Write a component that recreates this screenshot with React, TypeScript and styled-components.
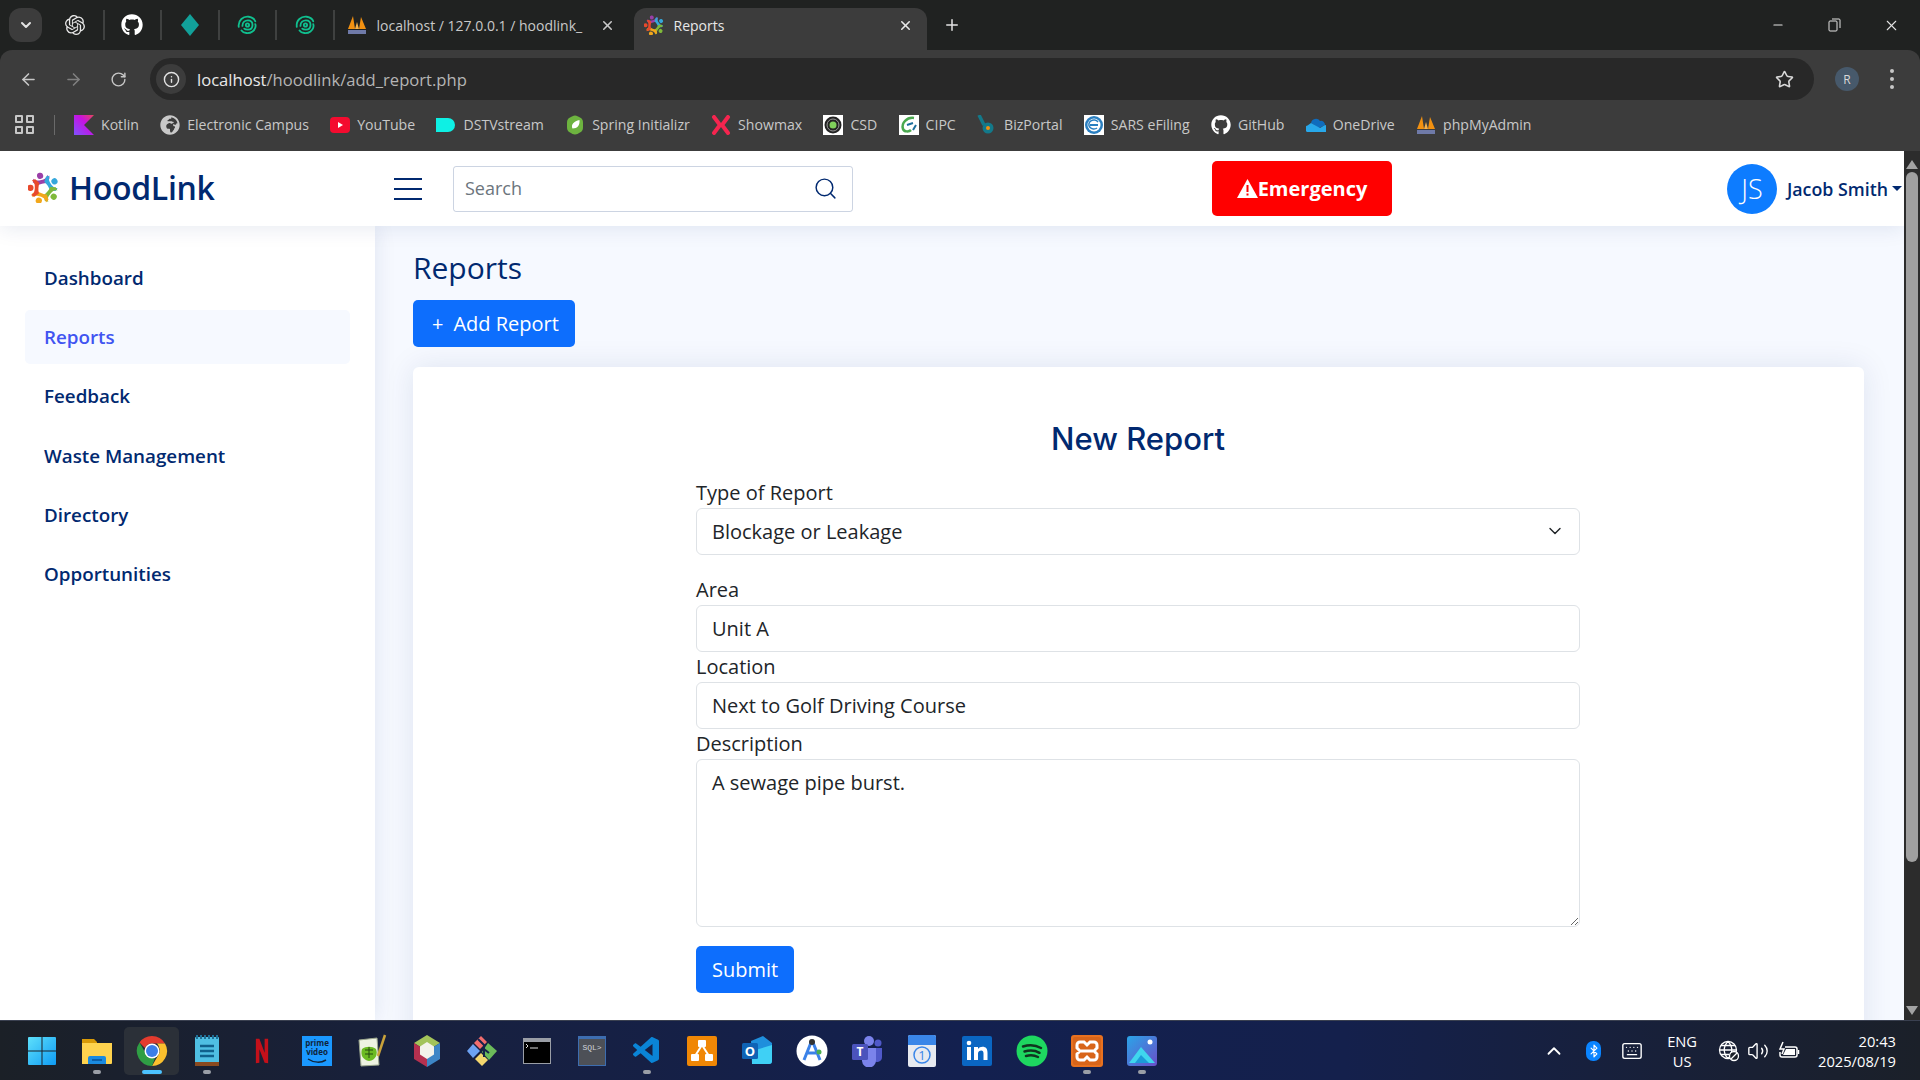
import React from "react";
import styled, { createGlobalStyle } from "styled-components";
import { FaGithub, FaGlobeAfrica } from "react-icons/fa";
import { SiOpenai } from "react-icons/si";
import { VscVscode } from "react-icons/vsc";
import {
  ArrowLeft,
  ArrowRight,
  RotateCw,
  Info,
  Star,
  ChevronDown,
  ChevronUp,
  X,
  Plus,
  Minus,
  Search,
  Bluetooth,
  Keyboard,
  Volume2,
} from "lucide-react";

const GlobalStyle = createGlobalStyle`
  * { box-sizing: border-box; }
  html, body { margin: 0; padding: 0; height: 100%; overflow: hidden; }
  body { font-family: "Open Sans", "Noto Sans", sans-serif; background: #202221; }
`;

const Frame = styled.div`
  width: 1920px;
  height: 1080px;
  display: flex;
  flex-direction: column;
  overflow: hidden;
`;

/* ---------- browser chrome ---------- */

const TabStrip = styled.div`
  height: 50px;
  flex: none;
  background: #202221;
  display: flex;
  align-items: center;
  padding-left: 9px;
  color: #e3e3e3;
`;

const TabSearch = styled.div`
  width: 33px;
  height: 34px;
  border-radius: 12px;
  background: #3c3c3c;
  display: flex;
  align-items: center;
  justify-content: center;
  margin-right: 5px;
`;

const PinnedTab = styled.div`
  width: 57.5px;
  height: 30px;
  display: flex;
  align-items: center;
  justify-content: center;
  border-right: 2px solid #3f4140;
  flex: none;
`;

const Tab = styled.div<{ $active?: boolean }>`
  width: ${(p) => (p.$active ? 293 : 299)}px;
  height: 42px;
  margin-top: 8px;
  padding: 0 ${(p) => (p.$active ? "14px" : "18.5px")} 8px ${(p) => (p.$active ? 10 : 12)}px;
  display: flex;
  align-items: center;
  gap: 10px;
  flex: none;
  border-radius: 12px 12px 0 0;
  background: ${(p) => (p.$active ? "#3c3c3c" : "transparent")};
  color: ${(p) => (p.$active ? "#e8e8e8" : "#c9c9c9")};
  font-size: 14px;
`;

const TabTitle = styled.span`
  flex: 1;
  white-space: nowrap;
  overflow: hidden;
`;

const NewTab = styled.div`
  width: 50px;
  display: flex;
  justify-content: center;
`;

const WindowControls = styled.div`
  margin-left: auto;
  display: flex;
  align-items: center;
`;

const WindowButton = styled.div`
  width: 57px;
  height: 50px;
  display: flex;
  align-items: center;
  justify-content: center;
`;

const Toolbar = styled.div`
  height: 51px;
  flex: none;
  background: #3c3c3c;
  border-radius: 12px 12px 0 0;
  display: flex;
  align-items: center;
  padding: 7px 0 0 6px;
  color: #c7c7c7;
`;

const NavButton = styled.div<{ $dim?: boolean }>`
  width: 45px;
  display: flex;
  justify-content: center;
  color: ${(p) => (p.$dim ? "#808080" : "#c7c7c7")};
`;

const AddressBar = styled.div`
  margin-left: 9px;
  width: 1664px;
  height: 42px;
  border-radius: 21px;
  background: #282828;
  display: flex;
  align-items: center;
  padding: 0 20px 0 6px;
  font-size: 16.6px;
  color: #e8e8e8;
`;

const InfoChip = styled.div`
  width: 30px;
  height: 30px;
  border-radius: 50%;
  background: #3c3c3c;
  display: flex;
  align-items: center;
  justify-content: center;
  margin-right: 11px;
`;

const UrlDim = styled.span`
  color: #b5b5b5;
`;

const StarSlot = styled.div`
  margin-left: auto;
  display: flex;
`;

const ProfileBubble = styled.div`
  width: 24px;
  height: 24px;
  border-radius: 50%;
  background: #47596b;
  color: #d8d8d8;
  font-size: 12px;
  display: flex;
  align-items: center;
  justify-content: center;
  margin-left: 21px;
`;

const Kebab = styled.div`
  margin-left: 31px;
  display: flex;
  flex-direction: column;
  gap: 4px;
  > i {
    width: 4px;
    height: 4px;
    border-radius: 50%;
    background: #c7c7c7;
  }
`;

const BookmarkBar = styled.div`
  height: 50px;
  flex: none;
  background: #3c3c3c;
  display: flex;
  align-items: center;
  padding: 0 0 3px 15px;
  font-size: 14.1px;
  color: #c8c8c8;
`;

const AppsGrid = styled.div`
  width: 19px;
  height: 19px;
  display: grid;
  grid-template-columns: 1fr 1fr;
  gap: 3px;
  > i {
    border: 2px solid #c7c7c7;
    border-radius: 1px;
  }
`;

const BarDivider = styled.div`
  width: 1px;
  height: 20px;
  background: #6a6a6a;
  margin: 0 19px 0 20px;
`;

const Bookmark = styled.div`
  display: flex;
  align-items: center;
  gap: 7px;
  margin-right: 21.3px;
  white-space: nowrap;
  > svg {
    flex: none;
  }
`;

/* ---------- page ---------- */

const Viewport = styled.div`
  flex: 1;
  min-height: 0;
  display: flex;
  background: #f6f9ff;
`;

const Page = styled.div`
  flex: 1;
  min-width: 0;
  display: flex;
  flex-direction: column;
  overflow: hidden;
`;

const Header = styled.header`
  height: 75px;
  flex: none;
  background: #fff;
  display: flex;
  align-items: center;
  position: relative;
  z-index: 2;
  box-shadow: 0 2px 20px rgba(1, 41, 112, 0.1);
`;

const Logo = styled.div`
  width: 394px;
  padding: 0 0 2px 28px;
  display: flex;
  align-items: center;
  gap: 10px;
  font-size: 32px;
  font-weight: 600;
  color: #012970;
  letter-spacing: -0.3px;
`;

const Hamburger = styled.div`
  width: 28px;
  height: 22px;
  display: flex;
  flex-direction: column;
  justify-content: space-between;
  margin-right: 31px;
  > i {
    height: 2px;
    background: #012970;
  }
`;

const SearchBox = styled.div`
  width: 400px;
  height: 46px;
  border: 1px solid rgba(1, 41, 112, 0.2);
  border-radius: 3px;
  display: flex;
  align-items: center;
  padding: 0 14px 1px 9px;
  color: #012970;
  margin-right: 359px;
`;

const SearchField = styled.input`
  flex: 1;
  min-width: 0;
  border: 0;
  outline: 0;
  font: 18px "Open Sans", sans-serif;
  color: #012970;
  &::placeholder {
    color: #6c757d;
  }
`;

const EmergencyButton = styled.button`
  width: 180px;
  height: 55px;
  border: 0;
  border-radius: 5px;
  background: #ff0000;
  color: #fff;
  font: 700 20px "Open Sans", sans-serif;
  display: flex;
  align-items: center;
  justify-content: center;
`;

const Profile = styled.div`
  margin-left: auto;
  display: flex;
  align-items: center;
  color: #012970;
  font-size: 17.8px;
  font-weight: 600;
  padding-right: 2px;
`;

const Avatar = styled.div`
  width: 50px;
  height: 50px;
  border-radius: 50%;
  background: #0d7cff;
  color: #fff;
  font-size: 27px;
  font-weight: 300;
  display: flex;
  align-items: center;
  justify-content: center;
  margin-right: 10px;
`;

const Caret = styled.i`
  width: 0;
  height: 0;
  margin-left: 4px;
  border: 5px solid transparent;
  border-top-color: #012970;
  border-bottom: 0;
`;

const Body = styled.div`
  flex: 1;
  min-height: 0;
  display: flex;
`;

const Sidebar = styled.aside`
  width: 375px;
  flex: none;
  background: #fff;
  padding: 25px 25px;
  box-shadow: 0 0 20px rgba(1, 41, 112, 0.1);
  display: flex;
  flex-direction: column;
  gap: 5px;
`;

const NavItem = styled.a<{ $active?: boolean }>`
  height: 54.2px;
  display: flex;
  align-items: center;
  padding-left: 19px;
  border-radius: 5px;
  font-size: 18.8px;
  font-weight: 600;
  color: ${(p) => (p.$active ? "#4154f1" : "#012970")};
  background: ${(p) => (p.$active ? "#f6f9ff" : "transparent")};
`;

const Main = styled.main`
  flex: 1;
  min-width: 0;
  padding: 19px 40px 0 38px;
`;

const PageTitle = styled.h1`
  margin: 0 0 9px;
  font-size: 30px;
  line-height: 46px;
  font-weight: 500;
  color: #012970;
`;

const PrimaryButton = styled.button`
  height: 47px;
  padding: 0 16px;
  border: 0;
  border-radius: 5px;
  background: #0d6efd;
  color: #fff;
  font: 20px "Open Sans", sans-serif;
  display: inline-flex;
  align-items: center;
`;

const AddButton = styled(PrimaryButton)`
  padding: 0 16px 0 19px;
  gap: 10px;
`;

const Card = styled.section`
  margin-top: 20px;
  height: 800px;
  background: #fff;
  border-radius: 6px;
  box-shadow: 0 0 30px rgba(1, 41, 112, 0.1);
  padding: 50px 284px 0 283px;
`;

const CardTitle = styled.h2`
  margin: 0 0 16.5px;
  text-align: center;
  font: 500 31px/44px Inter, "Open Sans", sans-serif;
  color: #012970;
`;

const Label = styled.label`
  display: block;
  height: 30px;
  font-size: 20px;
  line-height: 30px;
  color: #212529;
`;

const fieldCss = `
  display: block;
  width: 100%;
  border: 1px solid #dee2e6;
  border-radius: 6px;
  background: #fff;
  padding: 0 15px;
  font: 20px "Open Sans", sans-serif;
  color: #212529;
  outline: 0;
`;

const Field = styled.input`
  ${fieldCss}
  height: 47px;
`;

const SelectWrap = styled.div`
  position: relative;
  margin-bottom: 20px;
  color: #212529;
  > svg {
    position: absolute;
    right: 15px;
    top: 13px;
    pointer-events: none;
  }
`;

const SelectField = styled.select`
  ${fieldCss}
  height: 47px;
  appearance: none;
`;

const TextBlock = styled.textarea`
  ${fieldCss}
  height: 168px;
  padding-top: 8px;
  line-height: 30px;
  resize: vertical;
  margin-bottom: 19px;
`;

/* ---------- scrollbar ---------- */

const Scrollbar = styled.div`
  width: 16px;
  flex: none;
  background: #2c2c2c;
  display: flex;
  flex-direction: column;
  align-items: center;
  justify-content: space-between;
  padding: 9px 0 5px;
`;

const ScrollArrow = styled.i<{ $down?: boolean }>`
  width: 0;
  height: 0;
  border-left: 6px solid transparent;
  border-right: 6px solid transparent;
  ${(p) => (p.$down ? "border-top: 9px solid #a3a3a3;" : "border-bottom: 9px solid #a3a3a3;")}
`;

const ScrollThumb = styled.i`
  width: 12px;
  height: 690px;
  border-radius: 6px;
  background: #a0a0a0;
  margin: 3px 0 auto;
`;

/* ---------- taskbar ---------- */

const Taskbar = styled.footer`
  height: 60px;
  flex: none;
  display: flex;
  align-items: center;
  padding-left: 14px;
  color: #fff;
  background: linear-gradient(90deg, #1b2027 0%, #172040 25%, #13204f 50%, #14204c 70%, #1b2029 100%);
  border-top: 1px solid #3a4050;
`;

const TaskSlot = styled.div<{ $active?: boolean }>`
  width: 55px;
  height: 48px;
  flex: none;
  position: relative;
  display: flex;
  align-items: center;
  justify-content: center;
  border-radius: 5px;
  ${(p) => p.$active && "background: #2b3038;"}
`;

const RunDot = styled.i<{ $active?: boolean }>`
  position: absolute;
  left: 50%;
  bottom: 1px;
  transform: translateX(-50%);
  width: ${(p) => (p.$active ? 20 : 8)}px;
  height: 4px;
  border-radius: 2px;
  background: ${(p) => (p.$active ? "#4cc2ff" : "#9a9ea6")};
`;

const Tray = styled.div`
  margin-left: auto;
  display: flex;
  align-items: center;
  padding-right: 24px;
  font-size: 14.7px;
`;

const TrayIcon = styled.div<{ $gap?: number }>`
  display: flex;
  margin-right: ${(p) => p.$gap ?? 12}px;
`;

const BluetoothBadge = styled.div`
  width: 15px;
  height: 20px;
  border-radius: 7px;
  background: #0a84ff;
  display: flex;
  align-items: center;
  justify-content: center;
  margin-right: 20px;
`;

const Lang = styled.div`
  text-align: center;
  line-height: 20px;
  margin: 0 21px 0 0;
`;

const Clock = styled.div`
  text-align: right;
  line-height: 20px;
  margin-left: 11px;
`;

/* ---------- drawn icons ---------- */

type IconProps = { s?: number };

const Swirl = ({ s = 22 }: IconProps) => (
  <svg width={s} height={s} viewBox="0 0 24 24" fill="none" stroke="#10c08f" strokeWidth="2" strokeLinecap="round">
    <path d="M3 14C2 7 8 2 14 3c3 .5 6 2 7 5" />
    <path d="M6 18c2 3 8 4 12 1 3-2 4-6 3-8" />
    <path d="M7 13c0-4 3-6 6-6 3 0 5 2 5 5 0 3-2 5-5 5-1 0-3 0-4-1" />
    <circle cx="12.500" cy="12" r="1.800" />
  </svg>
);

const Diamond = () => (
  <svg width="22" height="24" viewBox="0 0 22 24">
    <path d="M11 1l9 11-9 11L2 12z" fill="#12a19a" />
  </svg>
);

const Pma = ({ s = 20 }: IconProps) => (
  <svg width={s} height={s} viewBox="0 0 20 20">
    <path d="M1 14L6 1l2 13z" fill="#f29111" />
    <path d="M8 14l2-7 2 7z" fill="#f6b24a" />
    <path d="M12 14l2-12 5 12z" fill="#f29111" />
    <rect x="1" y="15" width="18" height="4" fill="#6f7aa8" />
  </svg>
);

const personAngles = [
  { a: -15, c: "#9b3fa8" },
  { a: 57, c: "#35a8dc" },
  { a: 129, c: "#7fb93a" },
  { a: 201, c: "#f2a71b" },
  { a: 273, c: "#e8492c" },
];

const HoodMark = ({ s = 20 }: IconProps) => (
  <svg width={s} height={s} viewBox="0 0 32 32" fill="none">
    {personAngles.map((p) => (
      <g key={p.c} transform={`rotate(${p.a} 16 17)`}>
        <circle cx="16" cy="3.500" r="3.200" fill={p.c} />
        <path d="M8.500 4.500c1.500 2.500 3 3.500 7.500 3.500s6-1 7.500-3.500L25 8l-3.500 4.500c-3.500-1-7.500-1-11 0L7 8z" fill={p.c} />
      </g>
    ))}
  </svg>
);

const WhiteFavicon = ({ children }: { children: React.ReactNode }) => (
  <svg width="20" height="20" viewBox="0 0 20 20">
    <rect width="20" height="20" fill="#fff" />
    {children}
  </svg>
);

const KotlinIcon = () => (
  <svg width="20" height="20" viewBox="0 0 20 20">
    <defs>
      <linearGradient id="kt" x1="0" y1="1" x2="1" y2="0">
        <stop offset="0" stopColor="#7f52ff" />
        <stop offset="0.6" stopColor="#c711e1" />
        <stop offset="1" stopColor="#e44857" />
      </linearGradient>
    </defs>
    <path d="M0 0h20L10 10l10 10H0z" fill="url(#kt)" />
  </svg>
);

const YoutubeIcon = () => (
  <svg width="20" height="20" viewBox="0 0 20 20">
    <rect y="2" width="20" height="16" rx="4" fill="#f40b2f" />
    <path d="M8 7l5 3-5 3z" fill="#fff" />
  </svg>
);

const DstvIcon = () => (
  <svg width="20" height="20" viewBox="0 0 20 20">
    <path d="M0 3h12a7 7 0 010 14H0z" fill="#0ef0e4" />
  </svg>
);

const SpringIcon = () => (
  <svg width="20" height="20" viewBox="0 0 20 20">
    <path d="M10 .5c2 0 3 1 5 2s3 2.500 3 5v5c0 2.500-1 4-3 5s-3 2-5 2-3-1-5-2-3-2.500-3-5v-5c0-2.500 1-4 3-5s3-2 5-2z" fill="#6db33f" />
    <path d="M14.500 5c.5 5-2 8.500-7 8.500C5.500 10 9 6 14.500 5z" fill="#fff" />
  </svg>
);

const ShowmaxIcon = () => (
  <svg width="20" height="20" viewBox="0 0 20 20" fill="none" stroke="#f5254f" strokeWidth="4" strokeLinecap="round">
    <path d="M3 2l6 8-6 8M17 2l-6 8 6 8" />
  </svg>
);

const CsdIcon = () => (
  <WhiteFavicon>
    <circle cx="10" cy="10" r="8.500" fill="#222" />
    <circle cx="10" cy="10" r="6" fill="none" stroke="#999" />
    <circle cx="10" cy="10" r="3.500" fill="#7fd05a" />
  </WhiteFavicon>
);

const CipcIcon = () => (
  <WhiteFavicon>
    <path d="M15 3C8 2 2 8 4 14c1 3 6 3 8 1" fill="none" stroke="#4aa84f" strokeWidth="2.500" />
    <path d="M8 10l6-2M14 15l3-5" stroke="#1d6f9c" strokeWidth="2" />
  </WhiteFavicon>
);

const BizIcon = () => (
  <svg width="20" height="20" viewBox="0 0 20 20">
    <path d="M2 0l5 10" stroke="#13798a" strokeWidth="3.500" />
    <circle cx="11" cy="13" r="5.500" fill="#13798a" />
    <circle cx="11" cy="13" r="2" fill="#f29111" />
  </svg>
);

const SarsIcon = () => (
  <WhiteFavicon>
    <circle cx="10" cy="10" r="9" fill="#2a7fc0" />
    <circle cx="10" cy="10" r="6.500" fill="#fff" />
    <path d="M6 10h8" stroke="#2a7fc0" strokeWidth="2" />
    <path d="M14 7a5 4.500 0 10-1 6" fill="none" stroke="#2a7fc0" strokeWidth="1.500" />
  </WhiteFavicon>
);

const OneDriveIcon = () => (
  <svg width="20" height="20" viewBox="0 0 20 20">
    <path d="M5 8a5 5 0 019-2 4 4 0 015 4l-6 3z" fill="#0f6cbd" />
    <path d="M1 17a3.500 3.500 0 01.5-6.500L5 8l9 5 5-3a3.500 3.500 0 01-1 7z" fill="#28a8ea" />
  </svg>
);

const WindowsLogo = () => (
  <svg width="30" height="30" viewBox="0 0 30 30">
    <defs>
      <linearGradient id="win" x1="0" y1="0" x2="1" y2="1">
        <stop offset="0" stopColor="#5ee0fb" />
        <stop offset="1" stopColor="#0f9bf3" />
      </linearGradient>
    </defs>
    <path d="M1 2a1 1 0 011-1h12.500v13.500H1zM15.500 1H28a1 1 0 011 1v12.500H15.500zM1 15.500h13.500V29H2a1 1 0 01-1-1zM15.500 15.500H29V28a1 1 0 01-1 1H15.500z" fill="url(#win)" />
  </svg>
);

const ExplorerIcon = () => (
  <svg width="32" height="32" viewBox="0 0 32 32">
    <path d="M1 4h12l3 3v8H1z" fill="#d99a07" />
    <path d="M1 8h30v20a1 1 0 01-1 1H1z" fill="#ffd34e" />
    <path d="M9 21h14a2 2 0 012 2v6H7v-6a2 2 0 012-2z" fill="#1b8be0" />
    <rect x="11" y="24" width="10" height="2" fill="#0d5fa8" />
  </svg>
);

const ChromeIcon = () => (
  <svg width="32" height="32" viewBox="0 0 32 32">
    <path d="M16 1a15 15 0 0113 7.500H16a7.500 7.500 0 00-7 4.500L3.500 7.500A15 15 0 0116 1z" fill="#e33b2e" />
    <path d="M29 8.500A15 15 0 0116 31l6.500-11.300A7.500 7.500 0 0023 12.500 7 7 0 0021 8.500z" fill="#fbc02d" />
    <path d="M16 31A15 15 0 013.500 7.500L10 19a7.500 7.500 0 009 4z" fill="#2f9e44" />
    <circle cx="16" cy="16" r="7.500" fill="#fff" />
    <circle cx="16" cy="16" r="6" fill="#3b7de8" />
  </svg>
);

const NotepadIcon = () => (
  <svg width="24" height="32" viewBox="0 0 24 32">
    <rect y="2" width="24" height="27" rx="1" fill="#4fbfe3" />
    <rect y="27" width="24" height="4" fill="#8a4a20" />
    <path d="M2 0v4M6 0v4M10 0v4M14 0v4M18 0v4M22 0v4" stroke="#1f6f96" strokeWidth="2" />
    <path d="M5 11h14M5 16h14M5 21h14" stroke="#11618c" strokeWidth="2.500" />
  </svg>
);

const NetflixIcon = () => (
  <svg width="14" height="30" viewBox="0 0 16 30">
    <path d="M1 1h4l6 16V1h4v28l-4-.5L5 13v15.500L1 29z" fill="#c4101a" />
  </svg>
);

const PrimeIcon = () => (
  <svg width="30" height="30" viewBox="0 0 30 30">
    <rect width="30" height="30" fill="#1a98ff" />
    <text x="15" y="10" textAnchor="middle" fontFamily="Open Sans" fontWeight="700" fontSize="8" fill="#10243a">prime</text>
    <text x="15" y="19" textAnchor="middle" fontFamily="Open Sans" fontWeight="700" fontSize="8" fill="#10243a">video</text>
    <path d="M6 23c6 4 13 4 18 1" fill="none" stroke="#10243a" strokeWidth="1.500" />
  </svg>
);

const NotepadPlusIcon = () => (
  <svg width="30" height="34" viewBox="0 0 30 34">
    <path d="M2 6l18-2 2 27-18 1z" fill="#eef3e2" stroke="#9aa58c" />
    <path d="M5 15c4-3 10-3 14 0 2 5 0 11-7 12-6-1-9-6-7-12z" fill="#6cbb23" />
    <path d="M8 16h8M8 20h8M12 13v11" stroke="#254a10" />
    <path d="M21 22L28 1" stroke="#caa23a" strokeWidth="2.500" />
  </svg>
);

const NetbeansIcon = () => (
  <svg width="28" height="32" viewBox="0 0 28 32">
    <path d="M14 0l13 8-13 8L1 8z" fill="#a3c45a" />
    <path d="M1 8l13 8v16L1 24z" fill="#b5304f" />
    <path d="M27 8L14 16v16l13-8z" fill="#3d86c6" />
    <path d="M14 7l7 4.500v8L14 24l-7-4.500v-8z" fill="#f3f3ea" />
  </svg>
);

const GitGuiIcon = () => (
  <svg width="32" height="32" viewBox="0 0 32 32">
    <path d="M8 8l7-7 6 6-7 7z" fill="#f26d6d" />
    <path d="M22 8l9 8-8 9-7-8z" fill="#6cbb5a" />
    <path d="M7 9l7 7-7 7-6-7z" fill="#6da2f2" />
    <path d="M15 18l7 7-6 6-7-7z" fill="#f5d76e" />
    <path d="M12 4l6 6v12M18 14l5 4" stroke="#17224a" strokeWidth="2" fill="none" />
  </svg>
);

const TerminalIcon = () => (
  <svg width="28" height="26" viewBox="0 0 28 26">
    <rect width="28" height="26" fill="#9a9ea6" />
    <rect x="1" y="4" width="26" height="21" fill="#000" />
    <path d="M3 6l2 2-2 2M7 10h8" stroke="#ddd" fill="none" />
  </svg>
);

const SqlIcon = () => (
  <svg width="28" height="30" viewBox="0 0 28 30">
    <rect width="28" height="30" fill="#3d6db0" />
    <rect x="1" y="3" width="26" height="26" fill="#4d5057" />
    <text x="14" y="14" textAnchor="middle" fontFamily="Liberation Mono" fontSize="8" fill="#cfd3da">SQL&gt;</text>
  </svg>
);

const DrawioIcon = () => (
  <svg width="30" height="30" viewBox="0 0 30 30">
    <rect width="30" height="30" rx="2" fill="#f08705" />
    <path d="M15 9L8 20M15 9l7 11" stroke="#fff" strokeWidth="2" />
    <rect x="11" y="4" width="8" height="7" rx="1" fill="#fff" />
    <rect x="4" y="18" width="8" height="7" rx="1" fill="#fff" />
    <rect x="18" y="18" width="8" height="7" rx="1" fill="#fff" />
  </svg>
);

const OutlookIcon = () => (
  <svg width="32" height="32" viewBox="0 0 32 32">
    <path d="M10 6l12-5 9 7v18a3 3 0 01-3 3H11z" fill="#1f8fdc" />
    <path d="M11 16l20-6v16a3 3 0 01-3 3H11z" fill="#3fd0f5" />
    <rect x="1" y="8" width="16" height="16" rx="1.500" fill="#0f63b5" />
    <text x="9" y="21" textAnchor="middle" fontFamily="Open Sans" fontWeight="700" fontSize="13" fill="#fff">O</text>
  </svg>
);

const AndroidStudioIcon = () => (
  <svg width="32" height="32" viewBox="0 0 32 32">
    <circle cx="16" cy="16" r="15.500" fill="#fff" />
    <path d="M16 5l-8 20M16 5l8 20M10 18h12" stroke="#3b82e8" strokeWidth="3" fill="none" />
    <circle cx="16" cy="7" r="3" fill="#333" />
    <circle cx="23" cy="17" r="2.500" fill="#4caf50" />
  </svg>
);

const TeamsIcon = () => (
  <svg width="32" height="32" viewBox="0 0 32 32">
    <circle cx="18" cy="6" r="5" fill="#7b83eb" />
    <circle cx="27" cy="8" r="3.500" fill="#5059c9" />
    <path d="M22 13h9v9a5 5 0 01-9 3z" fill="#5059c9" />
    <path d="M10 13h15v12a7 7 0 01-14 1z" fill="#7b83eb" />
    <rect x="1" y="9" width="16" height="16" rx="1.500" fill="#4b53bc" />
    <text x="9" y="21" textAnchor="middle" fontFamily="Open Sans" fontWeight="700" fontSize="12" fill="#fff">T</text>
  </svg>
);

const CalendarIcon = () => (
  <svg width="28" height="32" viewBox="0 0 28 32">
    <rect width="28" height="32" rx="2" fill="#e7eaf0" />
    <path d="M0 2a2 2 0 012-2h24a2 2 0 012 2v8H0z" fill="#3a86e8" />
    <circle cx="14" cy="20" r="8" fill="none" stroke="#3a86e8" strokeWidth="1.500" />
    <text x="14" y="25" textAnchor="middle" fontFamily="Open Sans" fontSize="13" fill="#3a86e8">1</text>
  </svg>
);

const LinkedinIcon = () => (
  <svg width="30" height="30" viewBox="0 0 30 30">
    <rect width="30" height="30" rx="2" fill="#0a66c2" />
    <rect x="5" y="11" width="4" height="13" fill="#fff" />
    <circle cx="7" cy="7" r="2.300" fill="#fff" />
    <path d="M12 11h4v2c1-1.500 2.500-2.300 4.500-2.300 3.500 0 5 2 5 6V24h-4v-6.500c0-2-.7-3-2.300-3S16 15.500 16 17.500V24h-4z" fill="#fff" />
  </svg>
);

const SpotifyIcon = () => (
  <svg width="32" height="32" viewBox="0 0 32 32">
    <circle cx="16" cy="16" r="15.500" fill="#1ed760" />
    <path d="M7 11.500c6-1.800 13-1.300 18 1.500M8.500 16.500c5-1.400 11-1 15 1.300M10 21c4-1 8.500-.8 12 1" fill="none" stroke="#10351f" strokeWidth="2.500" strokeLinecap="round" />
  </svg>
);

const XamppIcon = () => (
  <svg width="32" height="32" viewBox="0 0 32 32">
    <rect width="32" height="32" rx="3" fill="#e8711f" />
    <rect x="2" y="2" width="28" height="28" rx="2" fill="#d8651a" />
    <path d="M9 7h4l3 3 3-3h4a3 3 0 013 3v3l-3 3 3 3v3a3 3 0 01-3 3h-4l-3-3-3 3H9a3 3 0 01-3-3v-3l3-3-3-3v-3a3 3 0 013-3z" fill="none" stroke="#fff" strokeWidth="3" />
    <path d="M10 16h12" stroke="#fff" strokeWidth="3" />
  </svg>
);

const PhotosIcon = () => (
  <svg width="30" height="30" viewBox="0 0 30 30">
    <defs>
      <linearGradient id="ph" x1="0" y1="0" x2="1" y2="1">
        <stop offset="0" stopColor="#2aa5e8" />
        <stop offset="1" stopColor="#6a4ec9" />
      </linearGradient>
    </defs>
    <rect width="30" height="30" rx="3" fill="url(#ph)" />
    <circle cx="23" cy="6" r="2.500" fill="#fff" />
    <path d="M2 27L14 11l14 16z" fill="#3fd6ee" />
    <path d="M8 27l6-8 8 8z" fill="#1c9bd8" />
  </svg>
);

const GlobeOff = () => (
  <svg width="22" height="22" viewBox="0 0 22 22" fill="none" stroke="#fff" strokeWidth="1.300">
    <circle cx="10" cy="10" r="8.500" />
    <path d="M1.500 10h17M10 1.500c-5 5-5 12 0 17M10 1.500c5 5 5 12 0 17M3 5.500h14M3 14.500h8" />
    <circle cx="16" cy="16" r="4.500" fill="#1b2029" />
    <path d="M13 19l6-6" />
  </svg>
);

const BatteryCharging = () => (
  <svg width="22" height="20" viewBox="0 0 22 20" fill="none" stroke="#fff" strokeWidth="1.500">
    <path d="M7 6h10a2 2 0 012 2v6a2 2 0 01-2 2H4a2 2 0 01-2-2v-3" />
    <path d="M20.500 9v4" />
    <path d="M5 1L2 8h4l-2 5" />
    <path d="M8 8h9v6H5z" fill="#fff" stroke="none" />
  </svg>
);

/* ---------- data ---------- */

const bookmarks = [
  { label: "Kotlin", icon: <KotlinIcon /> },
  { label: "Electronic Campus", icon: <FaGlobeAfrica size={20} color="#c9c9c9" /> },
  { label: "YouTube", icon: <YoutubeIcon /> },
  { label: "DSTVstream", icon: <DstvIcon /> },
  { label: "Spring Initializr", icon: <SpringIcon /> },
  { label: "Showmax", icon: <ShowmaxIcon /> },
  { label: "CSD", icon: <CsdIcon /> },
  { label: "CIPC", icon: <CipcIcon /> },
  { label: "BizPortal", icon: <BizIcon /> },
  { label: "SARS eFiling", icon: <SarsIcon /> },
  { label: "GitHub", icon: <FaGithub size={20} color="#fff" /> },
  { label: "OneDrive", icon: <OneDriveIcon /> },
  { label: "phpMyAdmin", icon: <Pma /> },
];

const navItems = ["Dashboard", "Reports", "Feedback", "Waste Management", "Directory", "Opportunities"];

const taskApps = [
  { id: "win", icon: <WindowsLogo /> },
  { id: "explorer", icon: <ExplorerIcon />, running: true },
  { id: "chrome", icon: <ChromeIcon />, active: true },
  { id: "notepad", icon: <NotepadIcon />, running: true },
  { id: "netflix", icon: <NetflixIcon /> },
  { id: "prime", icon: <PrimeIcon /> },
  { id: "npp", icon: <NotepadPlusIcon /> },
  { id: "netbeans", icon: <NetbeansIcon /> },
  { id: "git", icon: <GitGuiIcon /> },
  { id: "term", icon: <TerminalIcon /> },
  { id: "sql", icon: <SqlIcon /> },
  { id: "vscode", icon: <VscVscode size={32} color="#0a84d6" />, running: true },
  { id: "drawio", icon: <DrawioIcon /> },
  { id: "outlook", icon: <OutlookIcon /> },
  { id: "android", icon: <AndroidStudioIcon /> },
  { id: "teams", icon: <TeamsIcon /> },
  { id: "cal", icon: <CalendarIcon /> },
  { id: "linkedin", icon: <LinkedinIcon /> },
  { id: "spotify", icon: <SpotifyIcon /> },
  { id: "xampp", icon: <XamppIcon />, running: true },
  { id: "photos", icon: <PhotosIcon />, running: true },
];

export default function App() {
  return (
    <Frame>
      <GlobalStyle />
      <TabStrip>
        <TabSearch>
          <ChevronDown size={16} strokeWidth={3} />
        </TabSearch>
        <PinnedTab>
          <SiOpenai size={20} color="#e8e8e8" />
        </PinnedTab>
        <PinnedTab>
          <FaGithub size={22} color="#fff" />
        </PinnedTab>
        <PinnedTab>
          <Diamond />
        </PinnedTab>
        <PinnedTab>
          <Swirl />
        </PinnedTab>
        <PinnedTab>
          <Swirl />
        </PinnedTab>
        <Tab>
          <Pma />
          <TabTitle>localhost / 127.0.0.1 / hoodlink_</TabTitle>
          <X size={15} strokeWidth={2.5} />
        </Tab>
        <Tab $active>
          <HoodMark />
          <TabTitle>Reports</TabTitle>
          <X size={15} strokeWidth={2.5} />
        </Tab>
        <NewTab>
          <Plus size={18} strokeWidth={2} />
        </NewTab>
        <WindowControls>
          <WindowButton>
            <Minus size={14} />
          </WindowButton>
          <WindowButton>
            <svg width="13" height="14" viewBox="0 0 13 14" fill="none" stroke="#e3e3e3">
              <rect x="1" y="3" width="8" height="10" rx="1" />
              <path d="M4 1h7a1 1 0 011 1v8" />
            </svg>
          </WindowButton>
          <WindowButton>
            <X size={17} strokeWidth={1.5} />
          </WindowButton>
        </WindowControls>
      </TabStrip>

      <Toolbar>
        <NavButton>
          <ArrowLeft size={19} />
        </NavButton>
        <NavButton $dim>
          <ArrowRight size={19} />
        </NavButton>
        <NavButton>
          <RotateCw size={17} />
        </NavButton>
        <AddressBar>
          <InfoChip>
            <Info size={17} color="#e3e3e3" />
          </InfoChip>
          <span>
            localhost<UrlDim>/hoodlink/add_report.php</UrlDim>
          </span>
          <StarSlot>
            <Star size={19} color="#d8d8d8" />
          </StarSlot>
        </AddressBar>
        <ProfileBubble>R</ProfileBubble>
        <Kebab>
          <i />
          <i />
          <i />
        </Kebab>
      </Toolbar>

      <BookmarkBar>
        <AppsGrid>
          <i />
          <i />
          <i />
          <i />
        </AppsGrid>
        <BarDivider />
        {bookmarks.map((b) => (
          <Bookmark key={b.label}>
            {b.icon}
            {b.label}
          </Bookmark>
        ))}
      </BookmarkBar>

      <Viewport>
        <Page>
          <Header>
            <Logo>
              <HoodMark s={31} />
              HoodLink
            </Logo>
            <Hamburger>
              <i />
              <i />
              <i />
            </Hamburger>
            <SearchBox>
              <SearchField placeholder="Search" />
              <Search size={25} strokeWidth={1.4} />
            </SearchBox>
            <EmergencyButton>
              <svg width="21" height="19" viewBox="0 0 21 19">
                <path d="M10.500 0L21 19H0z" fill="#fff" />
                <path d="M9.500 6h2v7h-2zM9.500 14.500h2v2h-2z" fill="#f00" />
              </svg>
              Emergency
            </EmergencyButton>
            <Profile>
              <Avatar>JS</Avatar>
              Jacob Smith
              <Caret />
            </Profile>
          </Header>
          <Body>
            <Sidebar>
              {navItems.map((item) => (
                <NavItem key={item} $active={item === "Reports"}>
                  {item}
                </NavItem>
              ))}
            </Sidebar>
            <Main>
              <PageTitle>Reports</PageTitle>
              <AddButton>
                <span>+</span>
                <span>Add Report</span>
              </AddButton>
              <Card>
                <CardTitle>New Report</CardTitle>
                <Label>Type of Report</Label>
                <SelectWrap>
                  <SelectField defaultValue="Blockage or Leakage">
                    <option>Blockage or Leakage</option>
                  </SelectField>
                  <ChevronDown size={20} strokeWidth={1.7} />
                </SelectWrap>
                <Label>Area</Label>
                <Field defaultValue="Unit A" />
                <Label>Location</Label>
                <Field defaultValue="Next to Golf Driving Course" />
                <Label>Description</Label>
                <TextBlock defaultValue="A sewage pipe burst." />
                <PrimaryButton>Submit</PrimaryButton>
              </Card>
            </Main>
          </Body>
        </Page>
        <Scrollbar>
          <ScrollArrow />
          <ScrollThumb />
          <ScrollArrow $down />
        </Scrollbar>
      </Viewport>

      <Taskbar>
        {taskApps.map((app) => (
          <TaskSlot key={app.id} $active={app.active}>
            {app.icon}
            {(app.running || app.active) && <RunDot $active={app.active} />}
          </TaskSlot>
        ))}
        <Tray>
          <TrayIcon $gap={21}>
            <ChevronUp size={22} />
          </TrayIcon>
          <BluetoothBadge>
            <Bluetooth size={14} />
          </BluetoothBadge>
          <TrayIcon $gap={24}>
            <Keyboard size={22} strokeWidth={1.5} />
          </TrayIcon>
          <Lang>
            ENG
            <br />
            US
          </Lang>
          <TrayIcon $gap={7}>
            <GlobeOff />
          </TrayIcon>
          <TrayIcon $gap={9}>
            <Volume2 size={22} strokeWidth={1.5} />
          </TrayIcon>
          <TrayIcon $gap={7}>
            <BatteryCharging />
          </TrayIcon>
          <Clock>
            20:43
            <br />
            2025/08/19
          </Clock>
        </Tray>
      </Taskbar>
    </Frame>
  );
}
